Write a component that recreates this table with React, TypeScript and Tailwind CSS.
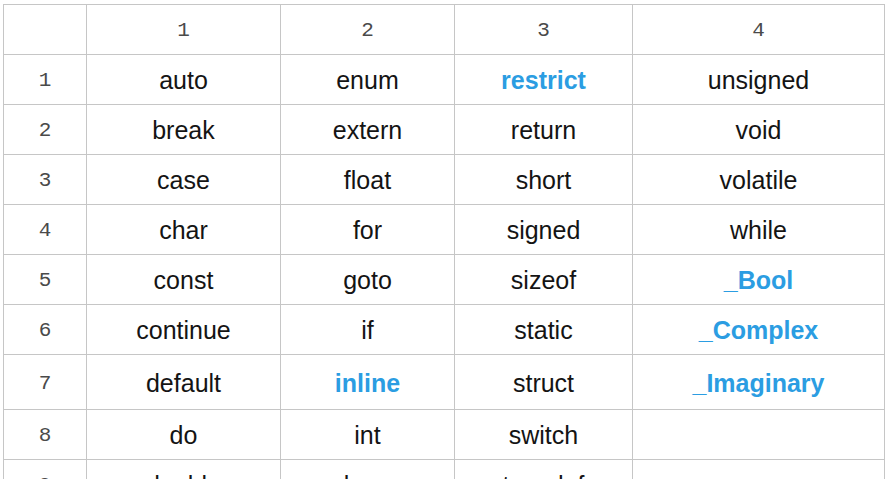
const rows: string[][] = [
  ["auto", "enum", "restrict", "unsigned"],
  ["break", "extern", "return", "void"],
  ["case", "float", "short", "volatile"],
  ["char", "for", "signed", "while"],
  ["const", "goto", "sizeof", "_Bool"],
  ["continue", "if", "static", "_Complex"],
  ["default", "inline", "struct", "_Imaginary"],
  ["do", "int", "switch", ""],
  ["double", "long", "typedef", ""],
];

const highlighted = new Set(["restrict", "inline", "_Bool", "_Complex", "_Imaginary"]);

const mono = "font-['Liberation_Mono',monospace] text-[21px] text-[#4a4a4a]";

export default function App() {
  return (
    <div className="min-h-screen bg-white pl-[3px] pt-[4px]">
      <table className="table-fixed border-collapse font-['Liberation_Sans',Arial,sans-serif]">
        <colgroup>
          <col className="w-[83px]" />
          <col className="w-[194px]" />
          <col className="w-[174px]" />
          <col className="w-[178px]" />
          <col className="w-[252px]" />
        </colgroup>
        <thead>
          <tr className="h-[50px]">
            <th className="border border-[#c6c6c6]" />
            {[1, 2, 3, 4].map((n) => (
              <th key={n} className={`border border-[#c6c6c6] pt-[3px] font-normal ${mono}`}>
                {n}
              </th>
            ))}
          </tr>
        </thead>
        <tbody>
          {rows.map((row, i) => (
            <tr key={i} className={i === 6 ? "h-[55px]" : "h-[50px]"}>
              <td className={`border border-[#c6c6c6] pt-[3px] text-center ${mono}`}>{i + 1}</td>
              {row.map((word, j) => (
                <td
                  key={j}
                  className={
                    highlighted.has(word)
                      ? "border border-[#c6c6c6] pt-[3px] text-center text-[25px] font-bold text-[#2b9de2]"
                      : "border border-[#c6c6c6] pt-[3px] text-center text-[25px] text-[#141414]"
                  }
                >
                  {word}
                </td>
              ))}
            </tr>
          ))}
        </tbody>
      </table>
    </div>
  );
}
